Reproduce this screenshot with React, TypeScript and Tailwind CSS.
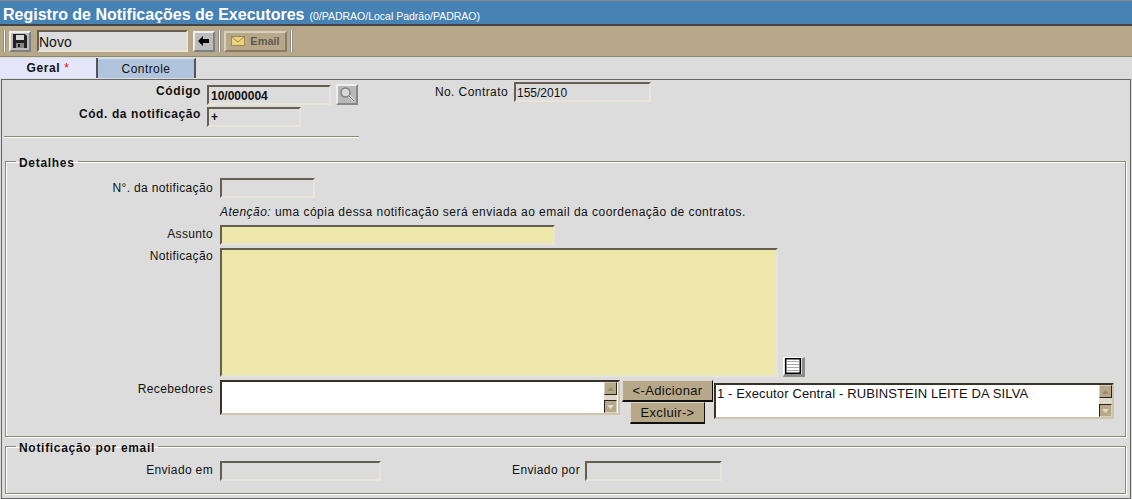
import type { ReactNode } from 'react';

function Field({ className, children }: { className: string; children?: ReactNode }) {
  return (
    <div
      className={`box-border border-2 border-t-[#665e4e] border-l-[#665e4e] border-r-[#e8e4d8] border-b-[#e8e4d8] leading-[15px] tracking-normal overflow-hidden ${className}`}
    >
      {children}
    </div>
  );
}

function Sep() {
  return <div className="w-[3px] h-[22px] bg-white border-x border-[#8f8f8f] mx-[3px]" />;
}

function ToolButton({ className, children }: { className: string; children: ReactNode }) {
  return (
    <div className={`box-border flex items-center justify-center border-2 ${className}`}>
      {children}
    </div>
  );
}

function ScrollBar({ className }: { className: string }) {
  return (
    <div className={`w-[13px] h-full bg-[#e0d8c8] flex flex-col justify-between shrink-0 ${className}`}>
      <div className="h-[13px] bg-[#b8a88a] border border-t-[#d8d0c0] border-l-[#d8d0c0] border-r-[#222] border-b-[#222] flex items-center justify-center">
        <svg width="7" height="4" viewBox="0 0 7 4"><path d="M3.5 0 7 4H0z" fill="#988a6e" /></svg>
      </div>
      <div className="h-[13px] bg-[#b8a88a] border border-t-[#222] border-l-[#222] border-r-[#d8d0c0] border-b-[#d8d0c0] flex items-center justify-center">
        <svg width="7" height="4" viewBox="0 0 7 4"><path d="M0 0H7L3.5 4z" fill="#e4dccc" /></svg>
      </div>
    </div>
  );
}

function TanButton({ className, children }: { className: string; children: ReactNode }) {
  return (
    <div
      className={`box-border flex items-center justify-center bg-[#b8a88a] border border-t-[#e0d8c8] border-l-[#e0d8c8] border-r-[#111] border-b-[#111] border-b-2 text-[13px] text-[#111] ${className}`}
    >
      {children}
    </div>
  );
}

export default function App() {
  return (
    <div className="w-[1132px] h-[499px] overflow-hidden bg-[#dcdcdc] text-[12px] text-[#111] font-['Liberation_Sans',Arial,sans-serif]">
      {/* title */}
      <div className="h-[26px] bg-[#4682b4] border-t border-[#888] border-b-2 border-b-[#444] flex items-baseline pl-[3px] pt-[4px] box-border">
        <span className="text-white font-bold text-[16px] leading-[20px]">Registro de Notificações de Executores</span>
        <span className="text-white text-[10.5px] ml-[5px]">(0/PADRAO/Local Padrão/PADRAO)</span>
      </div>

      {/* toolbar */}
      <div className="h-[31px] bg-[#b8a88a] flex items-center border-b border-[#8a8a70] box-border">
        <Sep />
        <ToolButton className="w-[22px] h-[21px] bg-[#bcbcbc] border-t-[#eee] border-l-[#eee] border-r-[#808080] border-b-[#808080]">
          <svg width="16" height="16" viewBox="0 0 16 16">
            <path d="M1 1H13L15 3V15H1Z" fill="#222" />
            <rect x="4" y="2" width="8" height="5" fill="#d8d8d8" />
            <rect x="4" y="10" width="8" height="5" fill="#888" />
            <rect x="6" y="11" width="2" height="3" fill="#222" />
          </svg>
        </ToolButton>
        <Field className="w-[151px] h-[22px] ml-[6px] bg-[#dcdcdc] text-[14px] tracking-[0.2px] leading-[18px] pt-[1px]">Novo</Field>
        <ToolButton className="w-[22px] h-[21px] ml-[5px] bg-[#bcbcbc] border-t-[#eee] border-l-[#eee] border-r-[#808080] border-b-[#808080]">
          <svg width="12" height="10" viewBox="0 0 12 10"><path d="M5 0V3H11V7H5V10L0 5Z" fill="#000" /></svg>
        </ToolButton>
        <Sep />
        <ToolButton className="w-[63px] h-[21px] bg-[#b8a88a] border-t-[#d8d0c0] border-l-[#d8d0c0] border-r-[#8a7c64] border-b-[#8a7c64] text-[#5f5a50] font-bold text-[11px] gap-[5px]">
          <svg width="14" height="10" viewBox="0 0 14 10">
            <rect x="0.5" y="0.5" width="13" height="9" fill="#ecd47c" stroke="#9a8a50" />
            <path d="M1 1 7 6 13 1" fill="none" stroke="#9a8a50" />
          </svg>
          Email
        </ToolButton>
        <Sep />
      </div>

      {/* tabs */}
      <div className="h-[21px] mt-[1px] flex">
        <div className="w-[98px] h-[20px] bg-[#e6e6fa] border-r-2 border-r-[#555] font-bold text-center leading-[21px] tracking-[0.6px] box-border">
          Geral <span className="text-[#e00] font-normal">*</span>
        </div>
        <div className="w-[98px] h-[20px] bg-[#b0c4de] border-r-2 border-r-[#555] border-t border-t-[#d8e0ec] text-center leading-[20px] tracking-[0.45px] box-border">
          Controle
        </div>
      </div>

      {/* form panel */}
      <div className="mx-[1px] h-[420px] border border-[#666] box-border tracking-[0.35px]">
        {/* header fields */}
        <div className="pl-[2px]">
          <div className="flex">
            <div className="w-[202px] pt-[2px] text-right font-bold pr-[5px] tracking-[0.6px]">Código</div>
            <Field className="mt-[5px] ml-[1px] w-[124px] h-[20px] font-bold pl-[2px] pt-[2px]">10/000004</Field>
            <ToolButton className="mt-[4px] ml-[5px] w-[22px] h-[21px] bg-[#b8b8b8] border-t-[#eee] border-l-[#eee] border-r-[#888] border-b-[#888]">
              <svg width="17" height="17" viewBox="0 0 17 17" fill="none">
                <circle cx="6.5" cy="6.5" r="4.5" stroke="#808080" strokeWidth="1.5" fill="#d8d8d8" />
                <path d="M10 10 15 15" stroke="#e0e0e0" strokeWidth="2.5" />
                <path d="M10 10 15 15" stroke="#808080" strokeWidth="1" />
              </svg>
            </ToolButton>
            <div className="w-[150px] pt-[3px] text-right tracking-[0.42px]">No. Contrato</div>
            <Field className="mt-[2px] ml-[6px] w-[137px] h-[20px] pl-[1px] pt-[2px]">155/2010</Field>
          </div>
          <div className="flex">
            <div className="w-[202px] text-right font-bold pr-[5px] tracking-[0.6px]">Cód. da notificação</div>
            <Field className="mt-[2px] ml-[1px] w-[94px] h-[20px] font-bold pl-[2px] pt-[1px]">+</Field>
          </div>
          <div className="w-[355px] h-[2px] mt-[9px] bg-[#8a8a70] border-b border-white" />
        </div>

        {/* detalhes */}
        <fieldset className="ml-[3px] mr-[4px] mt-[14px] h-[285px] border border-[#8a8a70] shadow-[inset_1px_1px_0_#fff,1px_1px_0_#fff] box-border">
          <legend className="ml-[10px] px-[3px] pt-[4px] font-bold leading-[14px] tracking-[0.7px]">Detalhes</legend>
          <div className="flex mt-[8px]">
            <div className="w-[207px] pt-[1px] text-right">N°. da notificação</div>
            <Field className="ml-[7px] w-[95px] h-[20px]" />
          </div>
          <div className="ml-[214px] mt-[7px] h-[14px] leading-[14px] tracking-[0.47px]">
            <em>Atenção:</em> uma cópia dessa notificação será enviada ao email da coordenação de contratos.
          </div>
          <div className="flex mt-[6px]">
            <div className="w-[207px] text-right">Assunto</div>
            <Field className="ml-[7px] w-[335px] h-[20px] bg-[#eee8aa]" />
          </div>
          <div className="flex mt-[3px] items-end">
            <div className="w-[207px] self-start -mt-[1px] text-right">Notificação</div>
            <Field className="ml-[7px] w-[558px] h-[129px] bg-[#eee8aa]" />
            <div className="ml-[5px] w-[22px] h-[20px] box-border flex items-start bg-[#dcdcdc] border-t border-l border-t-white border-l-white border-r-[3px] border-b-[3px] border-r-[#8c8c8c] border-b-[#8c8c8c] pl-[1px]">
              <svg width="16" height="16" viewBox="0 0 16 16" className="block">
                <rect x="0.75" y="0.75" width="14.5" height="14.5" fill="#fff" stroke="#000" strokeWidth="1.5" />
                <path d="M2 3.5H14M2 6.5H14M2 9.5H14M2 12.5H14" stroke="#aaa" />
              </svg>
            </div>
          </div>
          <div className="flex mt-[3px]">
            <div className="w-[207px] text-right">Recebedores</div>
            <div className="ml-[7px] w-[400px] h-[35px] box-border flex bg-white border-2 border-t-[#3a3428] border-l-[#3a3428] border-r-[#cfc4ac] border-b-[#cfc4ac]">
              <div className="flex-1" />
              <ScrollBar className="mr-[1px]" />
            </div>
            <div className="ml-[2px] w-[92px] flex flex-col items-start">
              <TanButton className="w-[91px] h-[22px]">&lt;-Adicionar</TanButton>
              <TanButton className="ml-[8px] w-[75px] h-[22px]">Excluir-&gt;</TanButton>
            </div>
            <div className="mt-[3px] w-[400px] h-[36px] box-border flex bg-white border-2 border-t-[#3a3428] border-l-[#3a3428] border-r-[#cfc4ac] border-b-[#cfc4ac]">
              <div className="flex-1 pl-[1px] pt-[1px] text-[13px] leading-[15px] tracking-[0.13px] truncate">1 - Executor Central - RUBINSTEIN LEITE DA SILVA</div>
              <ScrollBar className="mr-[0px]" />
            </div>
          </div>
        </fieldset>

        {/* email */}
        <fieldset className="ml-[3px] mr-[4px] h-[57px] border border-[#8a8a70] shadow-[inset_1px_1px_0_#fff,1px_1px_0_#fff] box-border">
          <legend className="ml-[10px] px-[3px] pt-[4px] font-bold leading-[14px] tracking-[0.7px]">Notificação por email</legend>
          <div className="flex mt-[6px]">
            <div className="w-[207px] text-right">Enviado em</div>
            <Field className="ml-[7px] w-[161px] h-[20px]" />
            <div className="w-[199px] text-right">Enviado por</div>
            <Field className="ml-[5px] w-[137px] h-[20px]" />
          </div>
        </fieldset>
      </div>
    </div>
  );
}
